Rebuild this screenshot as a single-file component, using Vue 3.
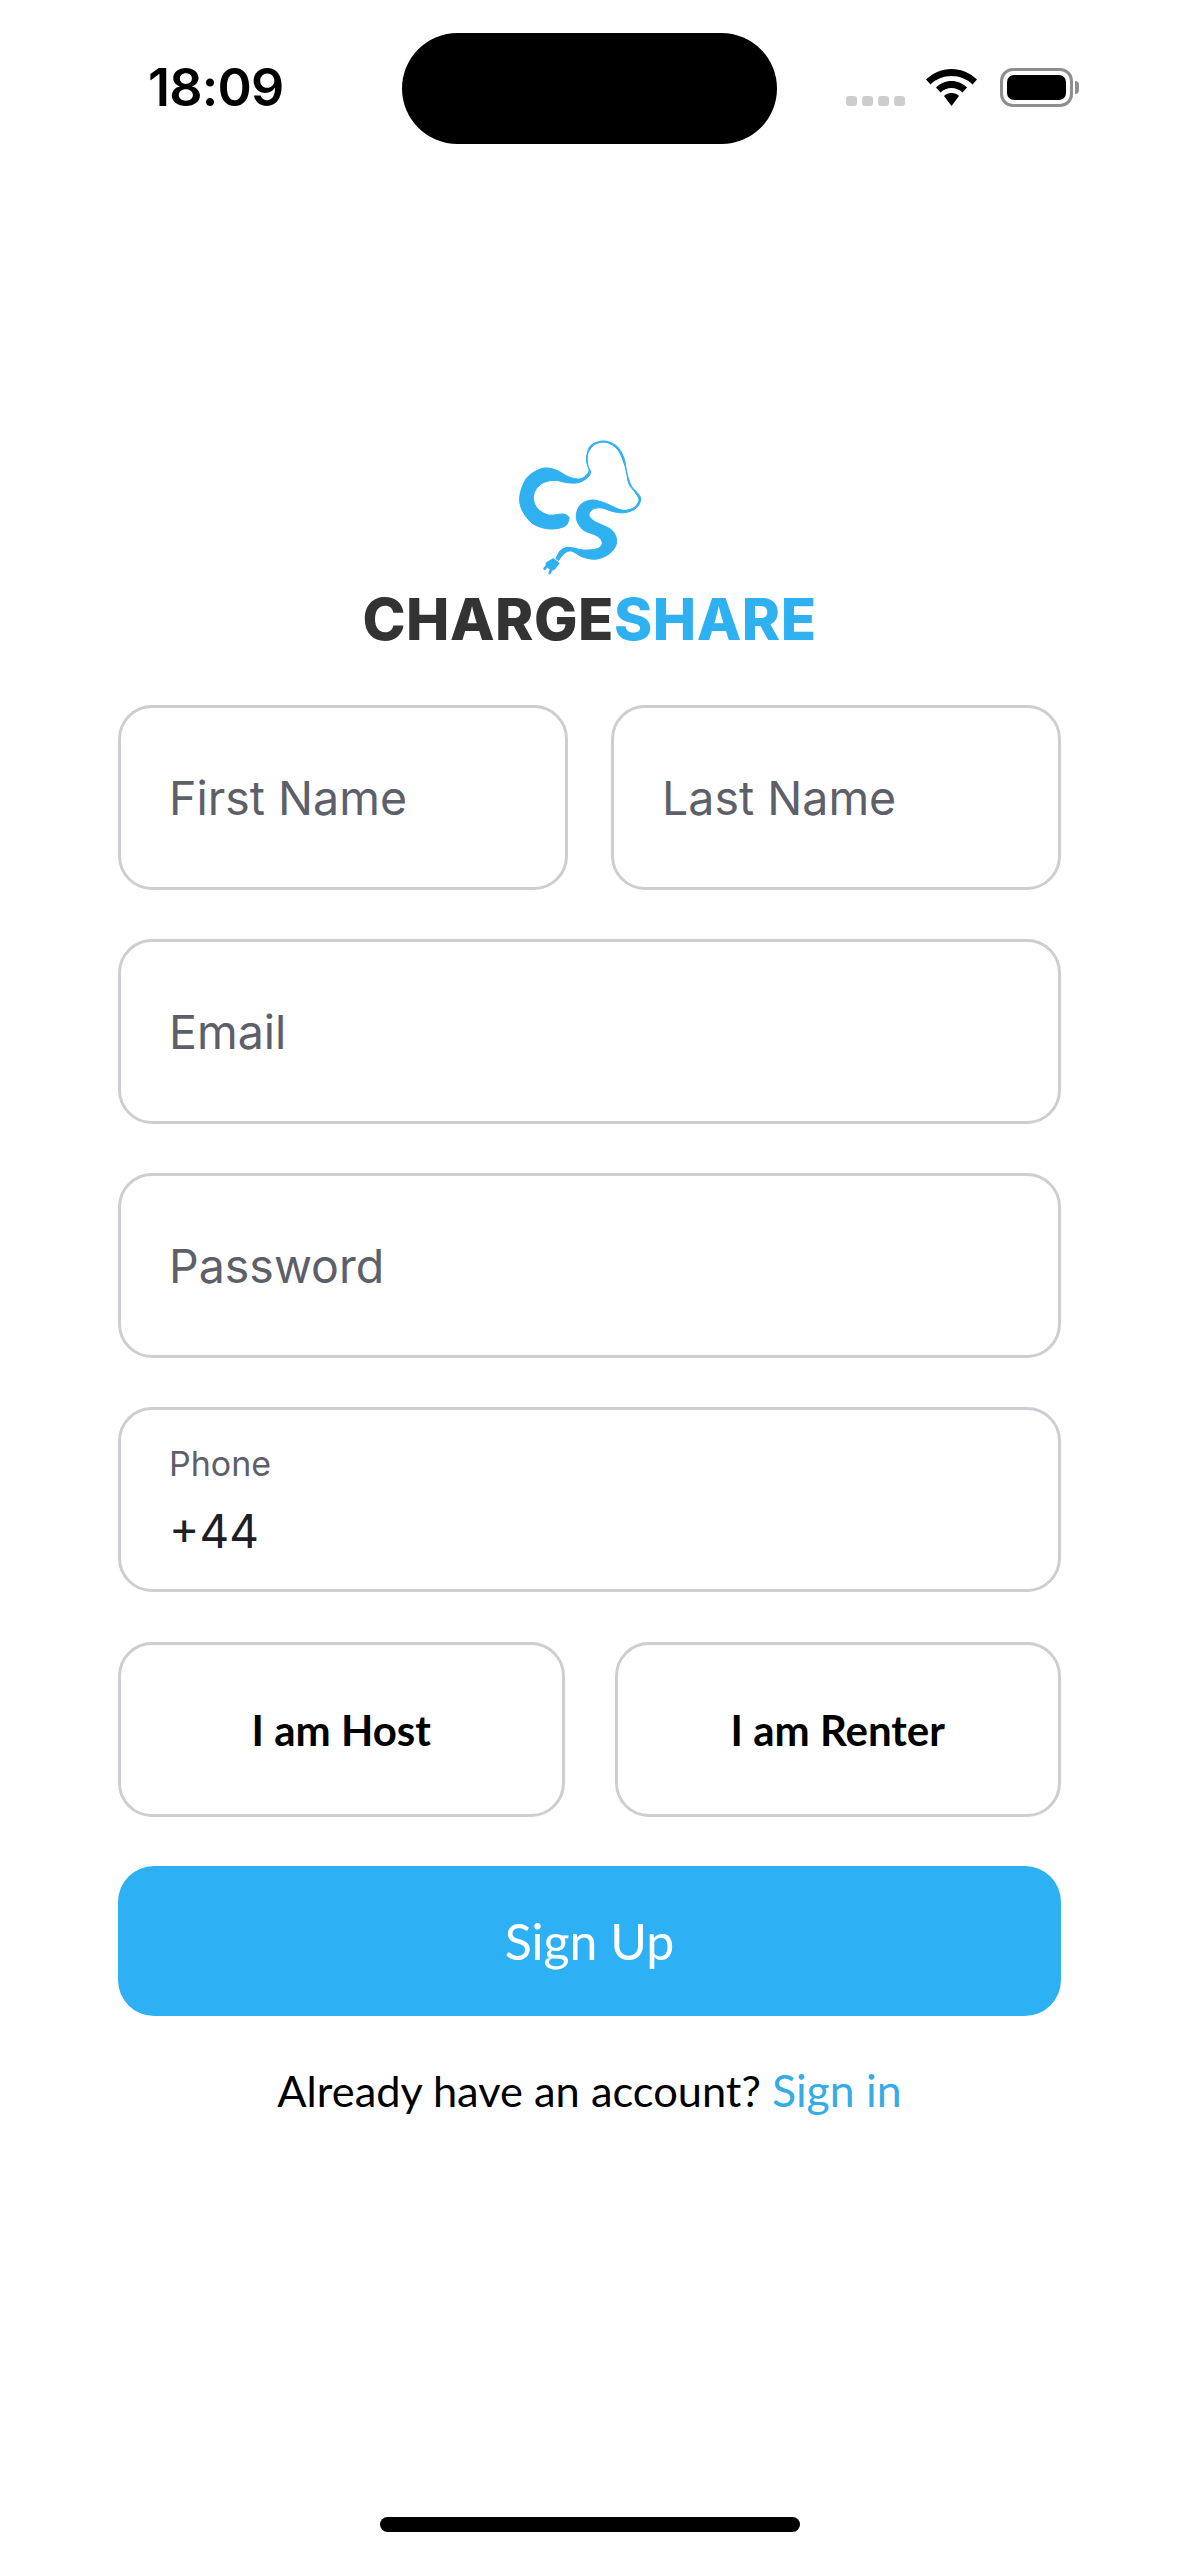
<script setup>
const edge1 = [[208,262],[196,288],[150,297],[100,282],[66,240],[60,195],[82,142],[128,115],[168,120],[205,140],[240,147],[262,132],[267,118],[259,90],[268,52],[292,36],[320,34],[352,50],[372,85],[381,130],[394,168],[416,193],[422,210],[408,235],[375,248],[340,245],[305,234],[278,238],[267,256],[285,275],[335,300],[350,335],[332,368],[292,387],[250,382],[214,363],[192,371],[176,391]]
const edge2 = [[168,386],[181,362],[206,352],[250,360],[292,356],[307,339],[292,318],[250,300],[229,265],[240,226],[275,210],[315,219],[350,235],[375,241],[403,232],[417,209],[405,187],[386,160],[376,112],[354,60],[318,37],[283,44],[263,72],[264,108],[272,125],[262,143],[235,158],[200,158],[165,151],[130,158],[108,178],[100,205],[112,235],[145,255],[190,252],[208,262]]
function smooth(points) {
  const p = points
  let d = `M${p[0][0]} ${p[0][1]}`
  for (let i = 0; i < p.length - 1; i++) {
    const a = p[Math.max(i - 1, 0)], b = p[i], c = p[i + 1], e = p[Math.min(i + 2, p.length - 1)]
    const c1 = [b[0] + (c[0] - a[0]) / 6, b[1] + (c[1] - a[1]) / 6]
    const c2 = [c[0] - (e[0] - b[0]) / 6, c[1] - (e[1] - b[1]) / 6]
    d += `C${c1[0].toFixed(1)} ${c1[1].toFixed(1)} ${c2[0].toFixed(1)} ${c2[1].toFixed(1)} ${c[0]} ${c[1]}`
  }
  return d
}
const cablePath = smooth(edge1) + `L${edge2[0][0]} ${edge2[0][1]}` + smooth(edge2).replace(/^M[^C]*/, '') + 'Z'
</script>

<template>
  <div class="page">
    <header class="status">
      <span class="time">18:09</span>
      <div class="island"></div>
      <div class="indicators">
        <div class="signal"><i></i><i></i><i></i><i></i></div>
        <svg class="wifi" viewBox="0 0 51 37" width="51" height="37">
          <path d="M25.5 0C35 0 44 4 51 10.5L46.5 15.5C41 10 33.5 7 25.5 7C17.5 7 10 10 4.5 15.5L0 10.5C7 4 16 0 25.5 0Z" />
          <path d="M25.5 12C31.5 12 37 14.5 41 18.5L36.5 23.5C33.5 20.5 29.5 19 25.5 19C21.5 19 17.5 20.5 14.5 23.5L10 18.5C14 14.5 19.5 12 25.5 12Z" />
          <path d="M25.5 24C28.5 24 31.3 25.2 33 27L25.5 37L18 27C19.7 25.2 22.5 24 25.5 24Z" />
        </svg>
        <div class="battery"><div class="charge"></div></div>
        <div class="nub"></div>
      </div>
    </header>

    <main class="content">
      <div class="brand">
        <svg class="mark" viewBox="0 0 537 480" width="179" height="160">
          <path class="cable" :d="cablePath" />
          <g class="plug">
            <path d="M160 384L179 399L166 418C161 423 153 422 148 418L139 410C135 405 136 400 140 396Z" />
            <path d="M144 404L134 416M155 416L149 429" class="prong" />
          </g>
        </svg>
        <div class="wordmark"><span class="dark">CHARGE</span><span class="blue">SHARE</span></div>
      </div>

      <div class="form">
        <div class="row names">
          <div class="field">First Name</div>
          <div class="field">Last Name</div>
        </div>
        <div class="field">Email</div>
        <div class="field">Password</div>
        <div class="field phone">
          <span class="label">Phone</span>
          <span class="value">+44</span>
        </div>
        <div class="row roles">
          <button class="role" type="button">I am Host</button>
          <button class="role" type="button">I am Renter</button>
        </div>
        <button class="submit" type="button">Sign Up</button>
      </div>

      <p class="signin">Already have an account? <a>Sign in</a></p>
    </main>

    <div class="home"></div>
  </div>
</template>

<style scoped>
.page {
  min-height: 2556px;
  display: flex;
  flex-direction: column;
  background: #fff;
  box-sizing: border-box;
  padding-bottom: 24px;
}
.status {
  display: flex;
  align-items: flex-start;
  height: 144px;
  box-sizing: border-box;
  padding: 33px 0 0 148px;
}
.time {
  width: 254px;
  margin-top: 28px;
  font: 600 52px/54px Inter, sans-serif;
  letter-spacing: -0.8px;
  color: #000;
}
.island {
  width: 375px;
  height: 111px;
  border-radius: 56px;
  background: #000;
}
.indicators {
  display: flex;
  align-items: flex-end;
  margin: 35px 0 0 69px;
}
.signal {
  display: flex;
  gap: 5px;
  margin-bottom: 1px;
  margin-right: 21px;
}
.signal i {
  width: 11px;
  height: 10px;
  border-radius: 3px;
  background: #cdcdcd;
}
.wifi {
  fill: #000;
  margin-right: 23px;
  margin-bottom: 1px;
}
.battery {
  width: 73px;
  height: 39px;
  box-sizing: border-box;
  border: 3px solid #8e8e8e;
  border-radius: 13px;
  padding: 4px;
}
.charge {
  height: 100%;
  border-radius: 7px;
  background: #000;
}
.nub {
  width: 4px;
  height: 13px;
  margin: 0 0 13px 2px;
  border-radius: 0 4px 4px 0;
  background: #8e8e8e;
}
.content {
  display: flex;
  flex-direction: column;
  padding: 286px 118px 0;
}
.brand {
  display: flex;
  flex-direction: column;
  align-items: center;
}
.mark {
  display: block;
}
.cable {
  fill: #2fb0f0;
  stroke: #2fb0f0;
  stroke-width: 3;
  stroke-linejoin: round;
}
.plug path {
  fill: #2fb0f0;
}
.plug .prong {
  fill: none;
  stroke: #2fb0f0;
  stroke-width: 8;
  stroke-linecap: round;
}
.wordmark {
  height: 57px;
  padding-top: 1px;
  font: 800 58px/56px Inter, sans-serif;
  letter-spacing: 0.5px;
  white-space: nowrap;
}
.dark {
  color: #333333;
}
.blue {
  color: #2fb0f0;
}
.form {
  display: flex;
  flex-direction: column;
  gap: 49px;
  margin-top: 57px;
}
.row {
  display: flex;
}
.names {
  gap: 43px;
}
.names .field {
  flex: 1;
}
.roles {
  gap: 50px;
  margin-top: 1px;
}
.field {
  display: flex;
  align-items: center;
  height: 185px;
  box-sizing: border-box;
  padding: 0 48px;
  border: 3px solid #ccced1;
  border-radius: 34px;
  font: 400 46.5px/58px Inter, sans-serif;
  color: #5d6068;
}
.phone {
  flex-direction: column;
  align-items: flex-start;
  justify-content: flex-start;
  padding-top: 32px;
}
.label {
  font-size: 34px;
  line-height: 44px;
}
.value {
  margin-top: 17px;
  font-size: 46px;
  line-height: 56px;
  color: #1e1f24;
}
.role {
  flex: 1;
  height: 175px;
  padding: 0;
  background: #fff;
  border: 3px solid #ccced1;
  border-radius: 34px;
  font: 700 42px/50px Lato, sans-serif;
  color: #000;
}
.submit {
  height: 150px;
  padding: 0;
  border: 0;
  border-radius: 36px;
  background: #2db1f4;
  font: 400 50px/58px Lato, sans-serif;
  color: #fff;
}
.signin {
  margin: 44px 0 0;
  text-align: center;
  font: 400 43.4px/60px Lato, sans-serif;
  color: #000;
}
.signin a {
  color: #35ace6;
  font-size: 44.6px;
}
.home {
  width: 420px;
  height: 15px;
  margin: auto auto 0;
  border-radius: 8px;
  background: #000;
}
</style>

<style>
html, body { background: #fff; }
</style>
